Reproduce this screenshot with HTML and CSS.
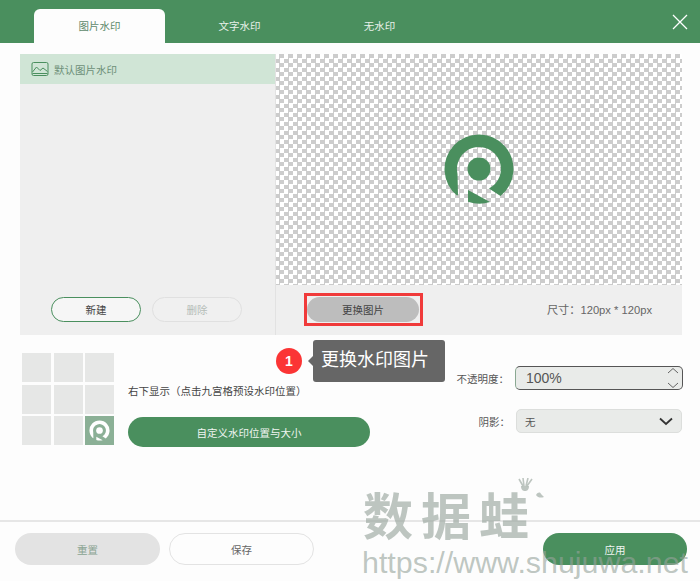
FILE: index.html
```html
<!DOCTYPE html>
<html lang="zh-CN">
<head>
    <meta charset="UTF-8">
    <title>图片水印</title>
    <link rel="stylesheet" href="styles.css">
</head>
<body>
    <svg class="defs" width="0" height="0">
        <symbol id="logo" viewBox="-36 -36 72 72">
            <path d="M-22 26.6A34.5 34.5 0 1 1 21.5 27L10 19.6A22 22 0 1 0-21.5 5L-21 26Z"/>
            <circle cx="0" cy="0" r="11.5"/>
            <path d="M-11 21L11 33A34.5 34.5 0 0 1-11 32.7Z"/>
        </symbol>
    </svg>

    <div class="app">
        <header class="topbar">
            <div class="tab active">图片水印</div>
            <div class="tab">文字水印</div>
            <div class="tab">无水印</div>
            <svg class="close" width="16" height="16" viewBox="0 0 16 16">
                <path d="M1 1L15 15M15 1L1 15"/>
            </svg>
        </header>

        <section class="panel">
            <div class="list-side">
                <div class="list">
                    <div class="list-item">
                        <svg class="pic-icon" width="18" height="16" viewBox="0 0 18 16">
                            <rect x="1" y="1.5" width="16" height="13" rx="1.5"/>
                            <path d="M1.5 11L5.5 6L9 9.5L12 7L16.5 10.5"/>
                            <path d="M1.5 12.5H16.5"/>
                        </svg>
                        <span>默认图片水印</span>
                    </div>
                </div>
                <div class="list-actions">
                    <button class="pill outline">新建</button>
                    <button class="pill disabled">删除</button>
                </div>
            </div>
            <div class="preview-side">
                <div class="preview">
                    <svg class="preview-logo" width="72" height="72"><use href="#logo"/></svg>
                </div>
                <div class="preview-actions">
                    <button class="pill swap">更换图片</button>
                    <span class="size">尺寸：120px * 120px</span>
                </div>
            </div>
        </section>

        <section class="options">
            <div class="nine-grid">
                <div class="cell"></div>
                <div class="cell"></div>
                <div class="cell"></div>
                <div class="cell"></div>
                <div class="cell"></div>
                <div class="cell"></div>
                <div class="cell"></div>
                <div class="cell"></div>
                <div class="cell on">
                    <svg width="21" height="21"><use href="#logo"/></svg>
                </div>
            </div>
            <div class="position">
                <p>右下显示（点击九宫格预设水印位置）</p>
                <button class="pill solid custom">自定义水印位置与大小</button>
            </div>
            <div class="fields">
                <div class="field">
                    <label>不透明度：</label>
                    <div class="spinner">
                        <span>100%</span>
                        <svg width="12" height="22" viewBox="0 0 12 22">
                            <path d="M1 6L6 1.5L11 6M1 16L6 20.5L11 16"/>
                        </svg>
                    </div>
                </div>
                <div class="field">
                    <label>阴影：</label>
                    <div class="select">
                        <span>无</span>
                        <svg width="14" height="9" viewBox="0 0 14 9">
                            <path d="M1 1.5L7 7L13 1.5"/>
                        </svg>
                    </div>
                </div>
            </div>
        </section>

        <footer class="bottom">
            <button class="pill big muted">重置</button>
            <button class="pill big plain">保存</button>
            <button class="pill big solid apply">应用</button>
        </footer>

        <div class="highlight"></div>
        <div class="step">1</div>
        <div class="tip">更换水印图片</div>

        <div class="watermark">
            <div class="wm-name">数据蛙</div>
            <div class="wm-url">https://www.shujuwa.net</div>
            <svg class="wm-crown" width="28" height="24" viewBox="0 0 28 24">
                <path class="wm-fan" d="M2 1L6 8M6 0L7 8M11 0L9 8M15 1L10 8"/>
                <path d="M4 8H12C12 12 10 13 8 13C6 13 4 12 4 8Z"/>
                <path d="M19 17C21 14 23 14 24 16L27 19C24 20 21 20 19 17Z"/>
            </svg>
        </div>
    </div>
</body>
</html>
```

FILE: styles.css
```css
:root {
    --green: #4a8f5e;
    --panel: #efefef;
    --cell: #e6e7e6;
    --text: #555;
}

* {
    box-sizing: border-box;
}

body {
    margin: 0;
    font-family: "Liberation Sans", "Noto Sans CJK SC", sans-serif;
    font-size: 10.5px;
    color: var(--text);
}

.defs {
    display: block;
    height: 0;
}

.app {
    position: relative;
    width: 700px;
    height: 581px;
    overflow: hidden;
    background: #fdfdfd;
    display: flex;
    flex-direction: column;
}

/* top bar */
.topbar {
    height: 43px;
    flex: none;
    background: var(--green);
    display: flex;
    align-items: flex-end;
    gap: 9px;
    padding-left: 34px;
    position: relative;
}

.tab {
    width: 131px;
    height: 34px;
    line-height: 34px;
    text-align: center;
    color: #e8f1ea;
    border-radius: 6px 6px 0 0;
}

.tab.active {
    background: #fdfdfd;
    color: #5d8a6b;
}

.close {
    margin-left: auto;
    margin-right: 12px;
    align-self: center;
}

.close path {
    stroke: #fff;
    stroke-width: 1.3;
    fill: none;
}

/* main panel */
.panel {
    display: flex;
    height: 281px;
    margin: 11px 18px 0 20px;
    background: var(--panel);
    flex: none;
}

.list-side {
    width: 256px;
    border-right: 1px solid #e2e2e2;
    display: flex;
    flex-direction: column;
}

.list {
    flex: 1;
}

.list-item {
    height: 30px;
    background: #d0e5d6;
    display: flex;
    align-items: center;
    gap: 5px;
    padding-left: 11px;
    color: #6d8f78;
}

.pic-icon {
    fill: none;
    stroke: #4a8f5e;
    stroke-width: 1;
}

.list-actions {
    height: 50px;
    display: flex;
    gap: 11px;
    padding: 12px 0 0 31px;
}

.preview-side {
    flex: 1;
    display: flex;
    flex-direction: column;
}

.preview {
    height: 231px;
    background-color: #fff;
    background-image: conic-gradient(#ccc 25%, #fff 0 50%, #ccc 0 75%, #fff 0);
    background-size: 9px 9px;
    background-position: -1px 0;
    display: flex;
    align-items: center;
    justify-content: center;
    padding: 0 1px 0 0;
}

.preview-logo {
    fill: var(--green);
    margin-top: -1px;
}

.preview-actions {
    flex: 1;
    display: flex;
    justify-content: space-between;
    padding: 12px 30px 0 31px;
}

.size {
    font-size: 11.2px;
    line-height: 26px;
    color: #666;
}

/* buttons */
.pill {
    font: inherit;
    height: 25px;
    width: 90px;
    border-radius: 13px;
    padding: 0;
    color: #444;
}

.outline {
    background: #f6f6f6;
    border: 1px solid var(--green);
}

.disabled {
    background: #f0f0f0;
    border: 1px solid #e0e0e0;
    color: #b5bdb8;
}

.swap {
    width: 112px;
    background: #bdbdbd;
    border: 0;
}

.solid {
    background: var(--green);
    border: 0;
    color: #f0f5f1;
}

/* position options */
.options {
    display: flex;
    margin: 18px 18px 0 22px;
    height: 94px;
    flex: none;
}

.nine-grid {
    display: grid;
    grid-template-columns: repeat(3, 29px);
    grid-template-rows: repeat(3, 29px);
    gap: 2.5px;
    align-content: start;
}

.cell {
    background: var(--cell);
}

.cell.on {
    background: #8bb096;
    fill: #fff;
    display: flex;
    align-items: center;
    justify-content: center;
}

.position {
    margin-left: 14px;
    padding-top: 30px;
}

.position p {
    margin: 0 0 17px;
    line-height: 17px;
    color: #444;
}

.custom {
    width: 242px;
    height: 30px;
    border-radius: 15px;
    display: block;
}

.fields {
    margin-left: auto;
    padding-top: 13px;
    display: flex;
    flex-direction: column;
    gap: 19px;
}

.field {
    display: flex;
    align-items: center;
    justify-content: flex-end;
    gap: 6px;
}

.spinner,
.select {
    background: #e9ebe9;
    display: flex;
    align-items: center;
    justify-content: space-between;
    border-radius: 5px;
}

.spinner {
    width: 168px;
    height: 24px;
    margin-right: -1px;
    border: 1px solid #555;
    border-left-color: #8aa892;
    padding: 0 3px 0 10px;
    font-size: 14px;
}

.spinner svg,
.select svg {
    fill: none;
    stroke: #555;
}

.spinner svg {
    stroke-width: 0.9;
}

.select {
    width: 166px;
    height: 24px;
    border: 1px solid #dcdedc;
    padding: 0 8px;
}

.select svg {
    stroke: #333;
    stroke-width: 1.8;
}

/* footer */
.bottom {
    margin-top: 73px;
    flex: 1;
    border-top: 2px solid #e6e6e6;
    display: flex;
    gap: 9px;
    padding: 11px 13px 0 15px;
}

.big {
    width: 145px;
    height: 32px;
    border-radius: 16px;
}

.muted {
    background: #e3e3e3;
    border: 0;
    color: #8aa392;
}

.plain {
    background: #fdfdfd;
    border: 1px solid #e3e3e3;
    color: #666;
}

.apply {
    width: 144px;
    margin-left: auto;
}

/* annotation overlays */
.highlight {
    position: absolute;
    left: 304px;
    top: 293px;
    width: 119px;
    height: 33px;
    border: 3px solid #f03a3a;
}

.step {
    position: absolute;
    left: 276px;
    top: 348px;
    width: 26px;
    height: 26px;
    border-radius: 50%;
    background: #fb3535;
    color: #fff;
    font-size: 14px;
    font-weight: bold;
    line-height: 26px;
    text-align: center;
}

.tip {
    position: absolute;
    left: 313px;
    top: 340px;
    width: 132px;
    height: 42px;
    line-height: 40px;
    padding-left: 8px;
    background: #666;
    border-radius: 3px;
    color: #fff;
    font-size: 18px;
}

.tip::before {
    content: "";
    position: absolute;
    left: -5px;
    top: 16px;
    border-style: solid;
    border-width: 5px 5px 5px 0;
    border-color: transparent #666 transparent transparent;
}

.watermark {
    position: absolute;
    left: 362px;
    top: 482px;
    width: 338px;
    pointer-events: none;
    color: rgba(150, 163, 155, 0.62);
}

.wm-name {
    font-family: "Noto Sans CJK SC", sans-serif;
    font-size: 50px;
    font-weight: 700;
    letter-spacing: 8px;
    line-height: 62px;
    margin-left: 1px;
}

.wm-url {
    font-size: 30.4px;
    line-height: 36px;
    white-space: nowrap;
}

.wm-crown {
    position: absolute;
    left: 155px;
    top: -4px;
    fill: rgba(150, 163, 155, 0.62);
}

.wm-fan {
    fill: none;
    stroke: rgba(150, 163, 155, 0.62);
    stroke-width: 1.6;
}
```
